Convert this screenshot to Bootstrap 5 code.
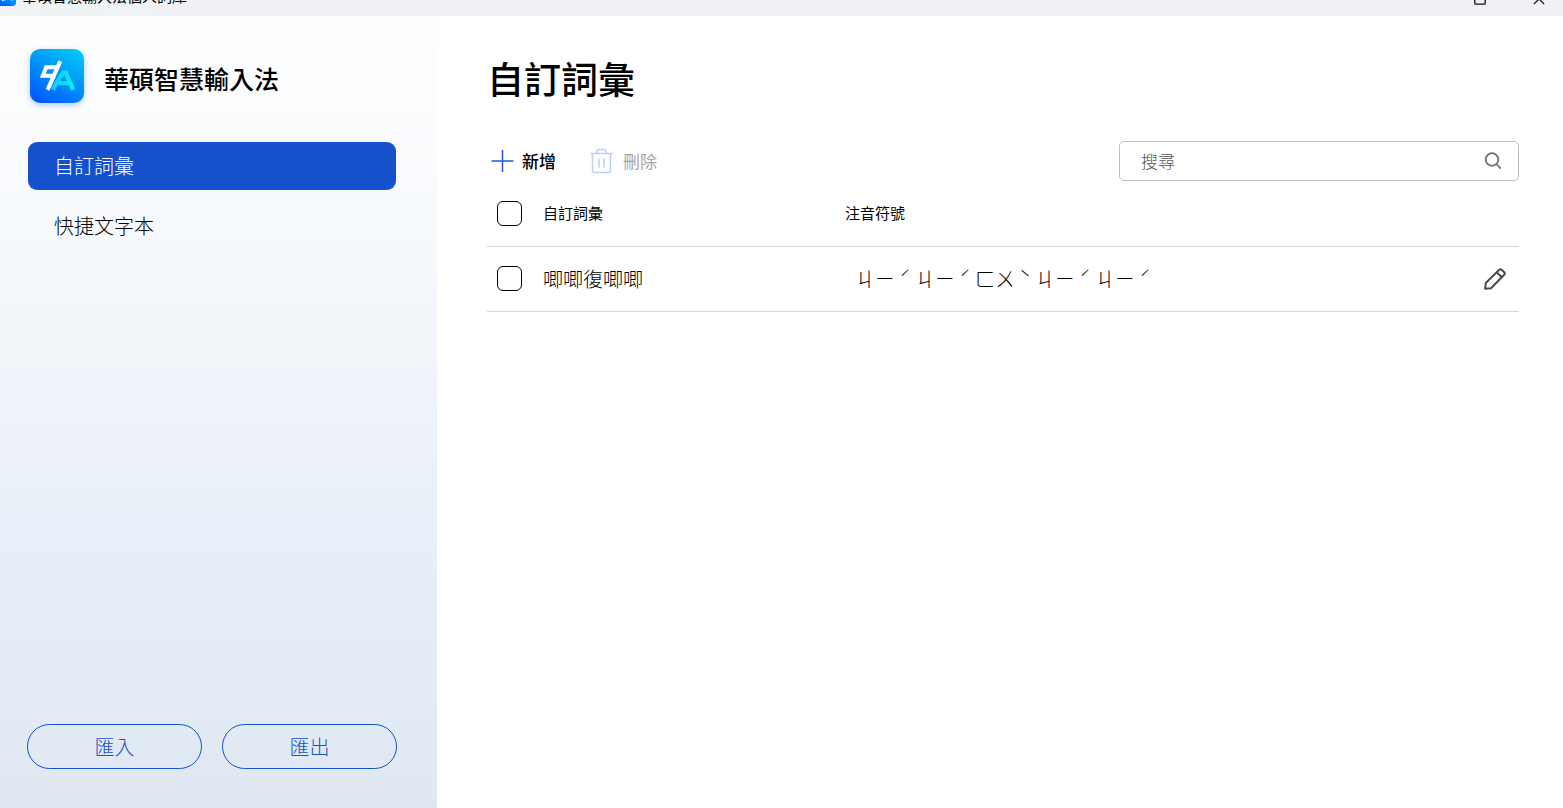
<!DOCTYPE html>
<html lang="zh-Hant">
<head>
<meta charset="utf-8">
<meta name="viewport" content="width=device-width, initial-scale=1">
<title>華碩智慧輸入法個人詞庫</title>
<link href="https://cdn.jsdelivr.net/npm/bootstrap@5.3.0/dist/css/bootstrap.min.css" rel="stylesheet">
<style>
  :root { --brand: #1451cb; --line: #d6d6d6; }
  body { font-family: "Noto Sans CJK TC", sans-serif; color: #000; }

  /* window caption, partly above the top edge of the screen */
  .titlebar { height: 40px; margin-top: -24px; background: linear-gradient(90deg, #eff3f3, #f2eff7 30%, #f2eff7); }
  .titlebar-icon { margin-left: -4px; }
  .titlebar-text { font-size: 15px; line-height: 20px; margin-left: 6px; }
  .caption-btn { width: 69px; color: #111; background: none; }
  .caption-btn:last-child { width: 49px; }

  .sidebar { width: 27.96%; background: linear-gradient(180deg, #fefefe, #fbfcfe 14%, #f3f7fb 36%, #e9eff8 65%, #dfe8f2); padding: 33px 40px 39px 27px; }
  .app-name { font-size: 25px; line-height: 32px; font-weight: 500; padding-top: 4px; }
  .logo { margin: 0 4px 0 3px; filter: drop-shadow(0 2px 3px rgba(30, 110, 220, .35)); }
  .side-nav { margin: 39px 1px 0; gap: 12px; }
  .side-link { font-size: 20px; line-height: 24px; font-weight: 300; color: #000; padding: 12px 26px; border-radius: 9px; }
  .side-link.active { background: var(--brand); color: #fff; }
  .pill-btn { --bs-btn-color: var(--brand); --bs-btn-border-color: var(--brand); --bs-btn-hover-color: #fff; --bs-btn-hover-bg: var(--brand); font-size: 20px; line-height: 24px; font-weight: 300; height: 45px; }

  .main-pane { padding: 30px 44px 32px 50px; min-width: 0; }
  .page-title { font-size: 37px; line-height: 64px; font-weight: 500; margin-bottom: 31px; }
  .tool-btn { font-size: 17px; line-height: 24px; font-weight: 500; color: #000; border: 0; background: none; gap: 8px; }
  .tool-btn:disabled { color: #a6a6a6; font-weight: 400; gap: 8px; }
  .search-box { width: 400px; height: 40px; border: 1px solid #bdbdbd; border-radius: 5px; padding: 0 16px 0 21px; }
  .search-input { font-size: 17px; line-height: 24px; font-weight: 300; }
  .search-input::placeholder { color: #555; opacity: 1; }

  .word-table { --bs-table-color: #000; --bs-table-bg: transparent; table-layout: fixed; }
  .word-table th, .word-table td { height: 65px; padding: 0; vertical-align: middle; font-weight: 300; border-bottom: 1px solid var(--line); }
  .word-table th { font-size: 15px; font-weight: 400; }
  .word-table td { font-size: 20px; }
  .word-table td.reading { padding-left: 10px; }
  .tone { display: inline-block; width: 20px; text-align: center; }
  .col-check { width: 56px; }
  .col-word { width: 302px; }
  .col-edit { width: 48px; }
  .word-table .form-check-input { width: 25px; height: 25px; margin: 0 0 0 10px; border: 1px solid #000; border-radius: 6px; display: block; }
</style>
</head>
<body class="d-flex flex-column vh-100 bg-white overflow-hidden">
<svg width="0" height="0" class="position-absolute" aria-hidden="true">
  <defs>
    <linearGradient id="logoFill" x1="0.2" y1="1" x2="0.8" y2="0"><stop offset="0" stop-color="#0058ff"/><stop offset="1" stop-color="#00c8f4"/></linearGradient>
    <linearGradient id="strokeFill" x1="0" y1="0" x2="1" y2="0"><stop offset="0" stop-color="#10c8ff"/><stop offset="1" stop-color="#08f0f0"/></linearGradient>
  </defs>
  <symbol id="logo" viewBox="0 0 160 160">
    <rect width="160" height="160" rx="30" fill="url(#logoFill)"/>
    <path d="M68 121L78 101L98 70H106L128 121M80 101H118" fill="none" stroke="url(#strokeFill)" stroke-width="13"/>
    <path d="M90 36L52 121M84 54H48L38 79H76" fill="none" stroke="#fff" stroke-width="12"/>
  </symbol>
</svg>

<header class="titlebar d-flex flex-shrink-0 align-items-center">
  <svg class="titlebar-icon" width="20" height="20" aria-hidden="true"><use href="#logo"/></svg>
  <span class="titlebar-text">華碩智慧輸入法個人詞庫</span>
  <div class="ms-auto d-flex">
    <button type="button" class="caption-btn border-0 p-0" aria-label="最大化">
      <svg width="12" height="12" viewBox="0 0 12 12" fill="none" stroke="currentColor" stroke-width="1.3"><rect x=".8" y=".8" width="10.4" height="10.4" rx="1"/></svg>
    </button>
    <button type="button" class="caption-btn border-0 p-0" aria-label="關閉">
      <svg width="12" height="12" viewBox="0 0 14 14" fill="none" stroke="currentColor" stroke-width="1.5"><path d="M1 1l12 12M13 1L1 13"/></svg>
    </button>
  </div>
</header>

<div class="d-flex flex-grow-1">
  <aside class="sidebar d-flex flex-column flex-shrink-0">
    <div class="d-flex align-items-center">
      <svg class="logo flex-shrink-0" width="54" height="54" aria-hidden="true"><use href="#logo"/></svg>
      <span class="app-name ms-3">華碩智慧輸入法</span>
    </div>
    <nav class="side-nav d-flex flex-column">
      <a href="#words" class="side-link active text-decoration-none" aria-current="page">自訂詞彙</a>
      <a href="#shortcuts" class="side-link text-decoration-none">快捷文字本</a>
    </nav>
    <div class="row g-0 mt-auto" style="column-gap: 20px">
      <button type="button" class="pill-btn btn rounded-pill col p-0">匯入</button>
      <button type="button" class="pill-btn btn rounded-pill col p-0">匯出</button>
    </div>
  </aside>

  <main class="main-pane flex-grow-1">
    <h1 class="page-title">自訂詞彙</h1>
    <div class="d-flex align-items-center">
      <button type="button" class="tool-btn d-flex align-items-center p-0 ms-1">
        <svg width="23" height="22" viewBox="0 0 23 22" fill="none" stroke="#1a5be0" stroke-width="1.5"><path d="M11.5 0v22M.5 11h22"/></svg>
        新增
      </button>
      <button type="button" class="tool-btn d-flex align-items-center p-0 ms-4 px-2" disabled>
        <svg width="27" height="26" viewBox="0 0 24 26" fill="none" stroke="#bdcff7" stroke-width="1.5"><path d="M1 5.500h22M7.500 5.500V3.500a2 2 0 0 1 2-2h5a2 2 0 0 1 2 2v2M3 5.500v17a2 2 0 0 0 2 2h14a2 2 0 0 0 2-2v-17M9.500 10.500v9M14.500 10.500v9"/></svg>
        刪除
      </button>
      <div class="search-box d-flex align-items-center ms-auto">
        <input type="search" class="search-input form-control border-0 shadow-none bg-transparent p-0" placeholder="搜尋" aria-label="搜尋">
        <svg class="flex-shrink-0" width="18" height="18" viewBox="0 0 18 18" fill="none" stroke="#6e6e6e" stroke-width="1.8"><circle cx="8" cy="7.500" r="6.300"/><path d="M12.400 12l4.400 4.600"/></svg>
      </div>
    </div>

    <table class="word-table table mb-0">
      <colgroup><col class="col-check"><col class="col-word"><col><col class="col-edit"></colgroup>
      <thead>
        <tr>
          <th scope="col"><input type="checkbox" class="form-check-input" aria-label="全選"></th>
          <th scope="col">自訂詞彙</th>
          <th scope="col">注音符號</th>
          <th></th>
        </tr>
      </thead>
      <tbody>
        <tr>
          <td><input type="checkbox" class="form-check-input" aria-label="選取 唧唧復唧唧"></td>
          <td>唧唧復唧唧</td>
          <td class="reading">ㄐㄧ<span class="tone">ˊ</span>ㄐㄧ<span class="tone">ˊ</span>ㄈㄨ<span class="tone">ˋ</span>ㄐㄧ<span class="tone">ˊ</span>ㄐㄧ<span class="tone">ˊ</span></td>
          <td>
            <button type="button" class="btn border-0 p-0 d-block mx-auto" aria-label="編輯">
              <svg class="d-block" width="22" height="22" viewBox="0 0 22 22" fill="none" stroke="#4a4a4a" stroke-width="2" stroke-linejoin="round"><path d="M1.200 20.800L1.800 15 15.200 1.800a1.800 1.800 0 0 1 2.500 0l2.500 2.500a1.800 1.800 0 0 1 0 2.500L7 20.200zM12.800 4.200l5 5"/></svg>
            </button>
          </td>
        </tr>
      </tbody>
    </table>
  </main>
</div>
<script src="https://cdn.jsdelivr.net/npm/bootstrap@5.3.0/dist/js/bootstrap.bundle.min.js"></script>
</body>
</html>
